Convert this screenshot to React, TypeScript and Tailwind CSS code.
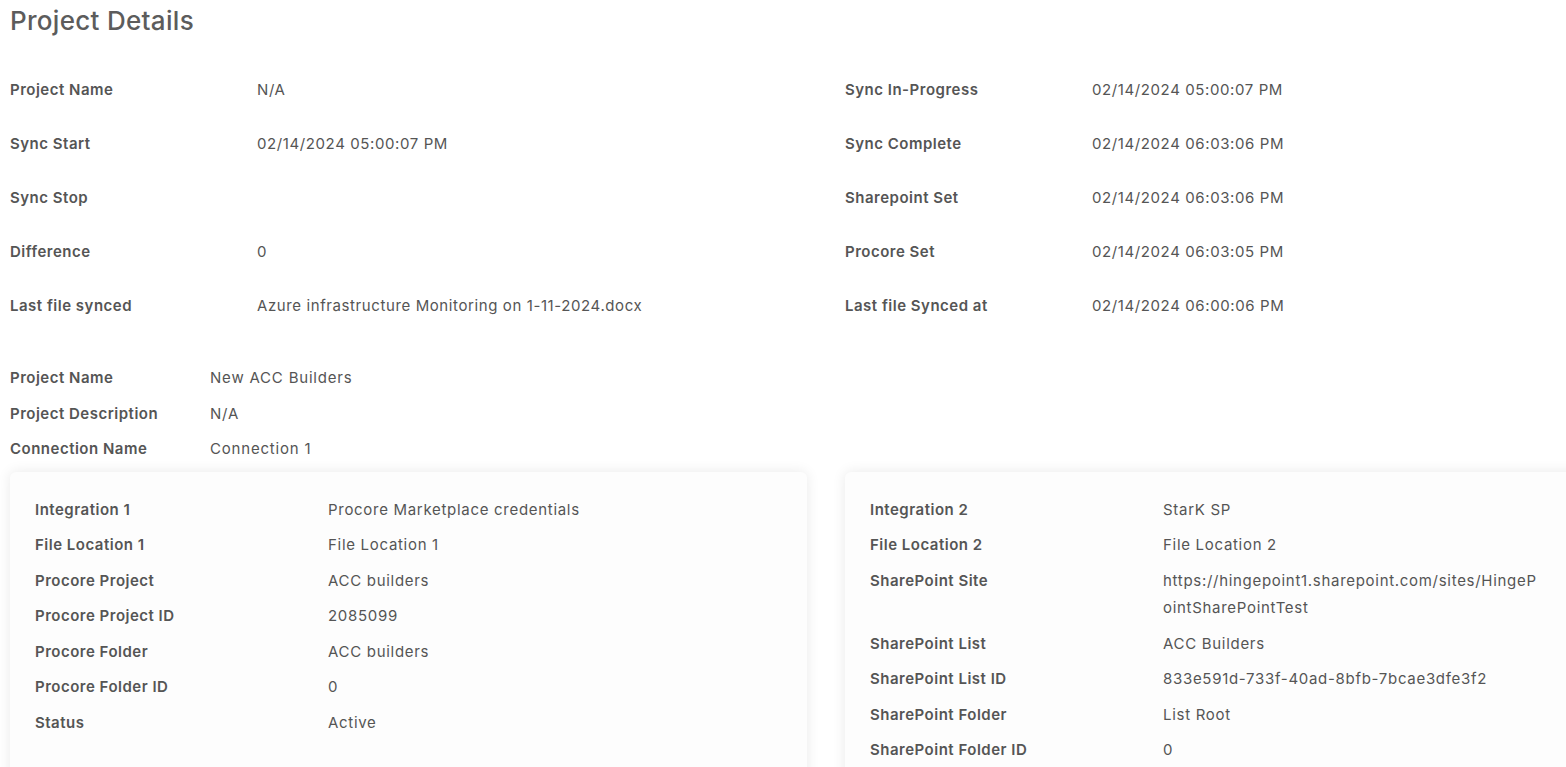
import React from 'react';

type Pair = [string, string];

const syncLeft: Pair[] = [
  ['Project Name', 'N/A'],
  ['Sync Start', '02/14/2024 05:00:07 PM'],
  ['Sync Stop', ''],
  ['Difference', '0'],
  ['Last file synced', 'Azure infrastructure Monitoring on 1-11-2024.docx'],
];

const syncRight: Pair[] = [
  ['Sync In-Progress', '02/14/2024 05:00:07 PM'],
  ['Sync Complete', '02/14/2024 06:03:06 PM'],
  ['Sharepoint Set', '02/14/2024 06:03:06 PM'],
  ['Procore Set', '02/14/2024 06:03:05 PM'],
  ['Last file Synced at', '02/14/2024 06:00:06 PM'],
];

const projectInfo: Pair[] = [
  ['Project Name', 'New ACC Builders'],
  ['Project Description', 'N/A'],
  ['Connection Name', 'Connection 1'],
];

const integration1: Pair[] = [
  ['Integration 1', 'Procore Marketplace credentials'],
  ['File Location 1', 'File Location 1'],
  ['Procore Project', 'ACC builders'],
  ['Procore Project ID', '2085099'],
  ['Procore Folder', 'ACC builders'],
  ['Procore Folder ID', '0'],
  ['Status', 'Active'],
];

const integration2: Pair[] = [
  ['Integration 2', 'StarK SP'],
  ['File Location 2', 'File Location 2'],
  ['SharePoint Site', 'https://hingepoint1.sharepoint.com/sites/HingePointSharePointTest'],
  ['SharePoint List', 'ACC Builders'],
  ['SharePoint List ID', '833e591d-733f-40ad-8bfb-7bcae3dfe3f2'],
  ['SharePoint Folder', 'List Root'],
  ['SharePoint Folder ID', '0'],
];

function SyncColumn({ rows }: { rows: Pair[] }) {
  return (
    <div>
      {rows.map(([label, value]) => (
        <div key={label} className="flex h-[54px] items-center pt-[2px]">
          <div className="w-[247px] shrink-0 font-semibold tracking-[0.5px] text-[#555]">{label}</div>
          <div className="tracking-[0.6px] text-[#555]">{value}</div>
        </div>
      ))}
    </div>
  );
}

function IntegrationCard({ rows }: { rows: Pair[] }) {
  return (
    <div className="rounded-md bg-[#fdfdfd] px-[25px] pt-[20px] pb-[20px] shadow-[0_0_14px_rgba(0,0,0,0.09)]">
      {rows.map(([label, value]) => (
        <div key={label} className="flex py-[4px] leading-[27.5px]">
          <div className="w-[293px] shrink-0 font-semibold tracking-[0.5px] text-[#555]">{label}</div>
          <div className="w-[380px] break-all tracking-[0.7px] text-[#555]">{value}</div>
        </div>
      ))}
    </div>
  );
}

export default function App() {
  return (
    <div className="h-screen w-full overflow-hidden bg-white">
      <div className="w-[1700px] pl-[10px] pt-[3px] font-['Inter',sans-serif] text-[15px] text-[#555]">
        <h1 className="text-[26px] font-medium leading-[36px] tracking-[0.3px] text-[#5c5c5c]">Project Details</h1>

        <div className="mt-[23px] grid w-[1670px] grid-cols-2">
          <SyncColumn rows={syncLeft} />
          <SyncColumn rows={syncRight} />
        </div>

        <div className="mt-[28px]">
          {projectInfo.map(([label, value]) => (
            <div key={label} className="flex leading-[35.5px]">
              <div className="w-[200px] shrink-0 font-semibold tracking-[0.5px]">{label}</div>
              <div className="tracking-[0.8px]">{value}</div>
            </div>
          ))}
        </div>

        <div className="mt-[5px] grid w-[1632px] grid-cols-2 gap-[38px]">
          <IntegrationCard rows={integration1} />
          <IntegrationCard rows={integration2} />
        </div>
      </div>
    </div>
  );
}
